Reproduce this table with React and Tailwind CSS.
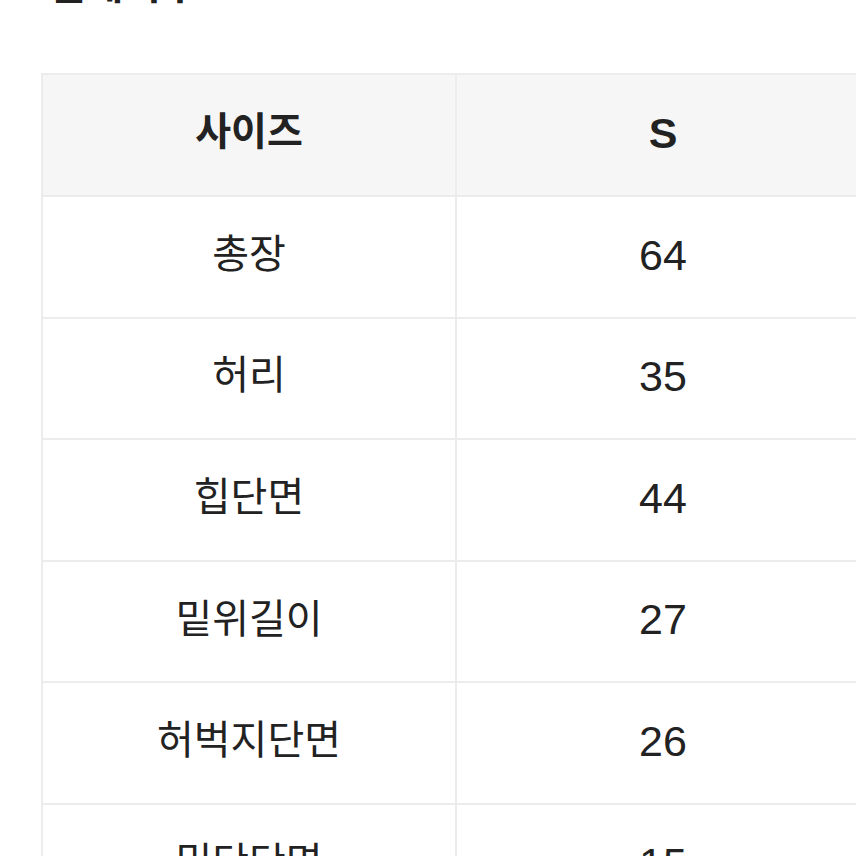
import React from "react";

const rows = [
  ["총장", "64"],
  ["허리", "35"],
  ["힙단면", "44"],
  ["밑위길이", "27"],
  ["허벅지단면", "26"],
  ["밑단단면", "15"],
];

const font = { fontFamily: '"Liberation Sans", "Noto Sans CJK KR", sans-serif' };

export default function App() {
  return (
    <div className="w-full h-[856px] overflow-hidden bg-white text-[#222]" style={font}>
      <div className="ml-[48px] -mt-[35px] h-[40px] text-[41px] leading-[40px] font-bold">실제치수</div>
      <div className="ml-[41px] mt-[68px] w-[830px] border-l-2 border-t-2 border-[#ececec]">
        <div className="grid grid-cols-[414px_414px] h-[122px] bg-[#f6f6f6]">
          <div className="flex items-center justify-center pb-[6px] border-r-2 border-b-2 border-[#ececec] text-[39px] font-bold">사이즈</div>
          <div className="flex items-center justify-center pb-[4px] border-r-2 border-b-2 border-[#ececec] text-[43px] font-bold">S</div>
        </div>
        {rows.map(([label, value]) => (
          <div key={label} className="grid grid-cols-[414px_414px] h-[121.6px]">
            <div className="flex items-center justify-center pb-[6px] border-r-2 border-b-2 border-[#ececec] text-[40px]">{label}</div>
            <div className="flex items-center justify-center pb-[4px] border-r-2 border-b-2 border-[#ececec] text-[43px]">{value}</div>
          </div>
        ))}
      </div>
    </div>
  );
}
